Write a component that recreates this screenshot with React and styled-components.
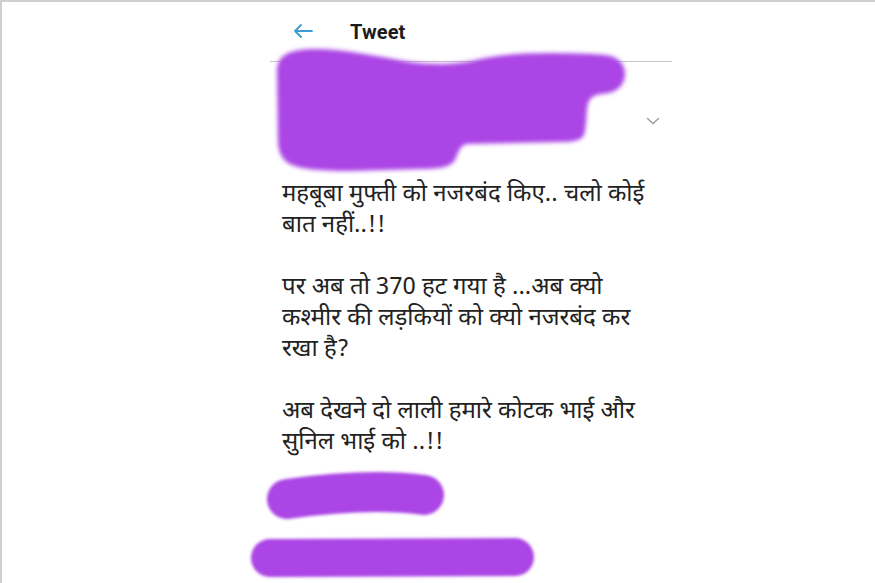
import React from 'react'
import styled, { createGlobalStyle } from 'styled-components'

const GlobalStyle = createGlobalStyle`
  html, body {
    margin: 0;
    padding: 0;
    background: #ffffff;
  }
`;

const INK = '#ab44e5';

const paragraphs = [
  ['महबूबा मुफ्ती को नजरबंद किए.. चलो कोई', 'बात नहीं..!!'],
  ['पर अब तो 370 हट गया है ...अब क्यो', 'कश्मीर की लड़कियों को क्यो नजरबंद कर', 'रखा है?'],
  ['अब देखने दो लाली हमारे कोटक भाई और', 'सुनिल भाई को ..!!'],
];

export default function App() {
  return (
    <>
      <GlobalStyle />
      <Frame>
        <Column>
          <Header>
            <BackArrow />
            <Title>Tweet</Title>
          </Header>
          <AuthorRow>
            <Chevron />
            <TopScribble />
          </AuthorRow>
          <TweetBody>
            {paragraphs.map((lines, i) => (
              <Paragraph key={i}>
                {lines.map((l, j) => <Line key={j}>{l}</Line>)}
              </Paragraph>
            ))}
          </TweetBody>
          <BottomScribble />
        </Column>
      </Frame>
    </>
  );
}

function BackArrow() {
  return (
    <ArrowSvg width="20" height="14" viewBox="0 0 20 14">
      <path d="M19 7H2M8 1L2 7l6 6" fill="none" stroke="#3d9bd6" strokeWidth="1.8" strokeLinecap="round" strokeLinejoin="round" />
    </ArrowSvg>
  );
}

function Chevron() {
  return (
    <ChevronSvg width="14" height="8" viewBox="0 0 14 8">
      <path d="M1.5 1.5l5.5 5 5.5-5" fill="none" stroke="#9a9a9a" strokeWidth="1.3" strokeLinecap="round" />
    </ChevronSvg>
  );
}

/* redaction marks, drawn in page coordinates */
function TopScribble() {
  return (
    <ScribbleOverlay width="402" height="132" viewBox="270 46 402 132">
      <defs>
        <filter id="soft" x="-10%" y="-30%" width="120%" height="160%">
          <feGaussianBlur stdDeviation="2" />
        </filter>
      </defs>
      <path
        filter="url(#soft)"
        fill={INK}
        d="M277 72 C277 56 290 50 315 50 C345 50 380 58 410 63 C430 66 460 66 480 60
           C510 53 560 53 605 56 C618 57 625 65 625 75 C625 87 616 94 602 95
           C592 96 588 100 587 110 C586 122 586 130 584 136 C581 142 572 143 562 143 L466 145
           C460 147 458 154 455 161 C451 168 440 170 420 170 L350 172
           C318 172 298 170 288 164 C280 158 278 150 278 140 Z"
      />
    </ScribbleOverlay>
  );
}

function BottomScribble() {
  return (
    <BottomSvg width="402" height="118" viewBox="270 465 402 118">
      <defs>
        <filter id="soft2" x="-20%" y="-50%" width="140%" height="200%">
          <feGaussianBlur stdDeviation="1.8" />
        </filter>
      </defs>
      <g filter="url(#soft2)" stroke={INK} strokeLinecap="round" fill="none">
        <path d="M287 502 C330 496 380 492 424 498" strokeWidth="40" />
        <path d="M270 561 L515 560" strokeWidth="38" />
      </g>
    </BottomSvg>
  );
}

const Frame = styled.div`
  width: 875px;
  height: 583px;
  box-sizing: border-box;
  border-top: 2px solid #cfcfcf;
  border-left: 2px solid #cfcfcf;
  background: #ffffff;
  display: grid;
  grid-template-columns: 268px 402px 1fr;
  overflow: hidden;
`;

const Column = styled.div`
  grid-column: 2;
  display: flex;
  flex-direction: column;
`;

const Header = styled.div`
  height: 60px;
  display: flex;
  align-items: center;
  padding-left: 23px;
  gap: 37px;
  border-bottom: 1px solid #c9c9c9;
  box-sizing: border-box;
`;

const ArrowSvg = styled.svg`
  display: block;
  margin-top: -2px;
`;

const Title = styled.span`
  font-family: Roboto, "Liberation Sans", sans-serif;
  font-weight: 700;
  font-size: 20px;
  color: #1c1c1c;
  letter-spacing: 0.1px;
`;

const AuthorRow = styled.div`
  position: relative;
  height: 114px;
  display: flex;
  justify-content: flex-end;
  align-items: center;
  padding-right: 12px;
`;

const ChevronSvg = styled.svg`
  display: block;
  margin-top: 4px;
`;

const ScribbleOverlay = styled.svg`
  position: absolute;
  left: 0;
  top: -17px;
  overflow: visible;
  pointer-events: none;
`;

const TweetBody = styled.div`
  padding: 4px 0 0 12px;
  display: flex;
  flex-direction: column;
  gap: 31px;
  font-family: "Noto Sans Devanagari", "Noto Sans", "Lohit Devanagari", sans-serif;
  font-size: 24px;
  line-height: 31px;
  color: #222222;
`;

const Paragraph = styled.p`
  margin: 0;
`;

const Line = styled.span`
  display: block;
  white-space: nowrap;
`;

const BottomSvg = styled.svg`
  display: block;
  margin-top: 3px;
  overflow: visible;
`;
